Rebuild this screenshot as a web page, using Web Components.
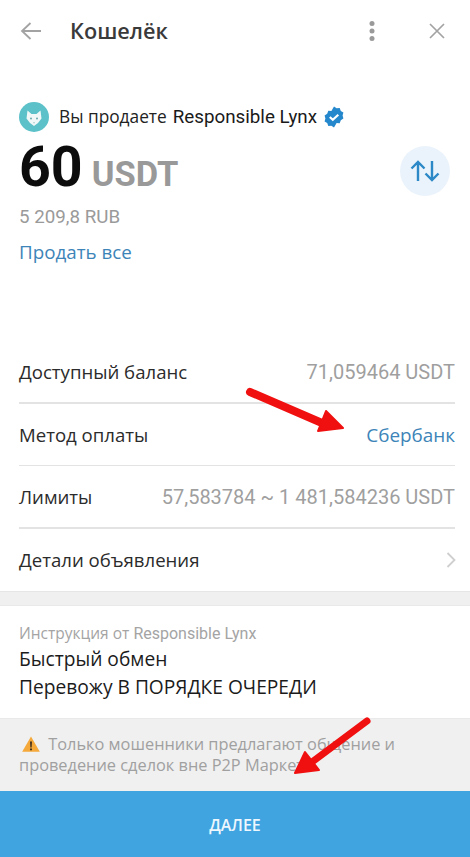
<!DOCTYPE html>
<html lang="ru">
<head>
<meta charset="utf-8">
<title>Кошелёк</title>
<style>
  html, body { margin: 0; padding: 0; background: #fff; }
  body { width: 470px; height: 857px; overflow: hidden; position: relative; font-family: "Open Sans", sans-serif; }
</style>
</head>
<body>
<wallet-app></wallet-app>

<script>
const FONT_OS = `"Open Sans", sans-serif`;
const FONT_RB = `Roboto, sans-serif`;

class WalletHeader extends HTMLElement {
    connectedCallback() {
        this.attachShadow({mode: "open"});
        this.shadowRoot.innerHTML = `
        <style>
          :host { display: flex; align-items: center; height: 62px; padding: 0 25px 0 20px; }
          svg { display: block; flex: none; }
          .title { font: 600 21.700px/28px ${FONT_OS}; color: #3a3a3a; margin-left: 28px; flex: 1; }
          .dots { margin-right: 54px; }
        </style>
        <svg width="22" height="20" viewBox="0 0 22 20" fill="none" stroke="#a3a3a3" stroke-width="1.8"><path d="M21 10H2M10.5 2 2 10l8.500 8"/></svg>
        <div class="title"><slot></slot></div>
        <svg class="dots" width="6" height="20" viewBox="0 0 6 20" fill="#9a9a9a"><circle cx="3" cy="2.500" r="2.500"/><circle cx="3" cy="10" r="2.500"/><circle cx="3" cy="17.500" r="2.500"/></svg>
        <svg width="16" height="16" viewBox="0 0 16 16" fill="none" stroke="#a3a3a3" stroke-width="1.700"><path d="M1 1l14 14M15 1 1 15"/></svg>`;
    }
}
customElements.define("wallet-header", WalletHeader);

class AmountPanel extends HTMLElement {
    connectedCallback() {
        this.attachShadow({mode: "open"});
        this.shadowRoot.innerHTML = `
        <style>
          :host { display: block; padding: 40px 20px 0 19px; height: 279px; box-sizing: border-box; }
          .seller { display: flex; align-items: center; height: 30px; font: 400 17.300px/30px ${FONT_OS}; color: #222; }
          .avatar { flex: none; margin-right: 10px; }
          .seller b { font: 400 18.800px/30px ${FONT_RB}; color: #1a1a1a; margin-left: 6px; }
          .badge { flex: none; margin-left: 6px; }
          .main { display: flex; align-items: center; justify-content: space-between; margin-top: 9px; height: 60px; }
          .sum { display: flex; align-items: baseline; gap: 9px; font: 700 55.500px/60px ${FONT_RB}; color: #0c0c0c; }
          .sum span { font-size: 34.500px; color: #999; }
          .swap { width: 50px; height: 50px; border-radius: 50%; background: #eaf3fb; display: flex; align-items: center; justify-content: center; }
          .fiat { font: 400 18.750px/24px ${FONT_RB}; color: #9a9a9a; margin-top: 4px; }
          .all { font: 400 18.800px/24px ${FONT_OS}; color: #3d84b8; margin-top: 11px; }
        </style>
        <div class="seller">
          <svg class="avatar" width="30" height="30" viewBox="0 0 30 30">
            <circle cx="15" cy="15" r="15" fill="#5cc1c9"/>
            <path d="M8.500 8.500 12.500 12h5l4-3.500 1 8L19 21l-4 3-4-3-3.500-4.500z" fill="#f2f7f7"/>
            <circle cx="12" cy="16.500" r="1" fill="#6aa9ad"/><circle cx="18" cy="16.500" r="1" fill="#6aa9ad"/>
            <path d="M14 20.500h2l-1 1z" fill="#6aa9ad"/>
          </svg>
          <span>Вы продаете</span><b>Responsible Lynx</b>
          <svg class="badge" width="22" height="22" viewBox="0 0 22 22">
            <path d="M11 0.500l2.600 1.700 3.100-.2 1.100 2.900 2.600 1.700-.8 3 .8 3-2.600 1.700-1.100 2.900-3.100-.2L11 21.500l-2.600-1.700-3.100.2-1.100-2.900-2.600-1.700.8-3-.8-3 2.600-1.700 1.100-2.900 3.100.2z" fill="#2587cc"/>
            <path d="M6.800 11l3 2.800 5.500-5" fill="none" stroke="#fff" stroke-width="2.200"/>
          </svg>
        </div>
        <div class="main">
          <div class="sum">60<span>USDT</span></div>
          <div class="swap">
            <svg width="30" height="22" viewBox="0 0 30 22" fill="none" stroke="#2c88c6" stroke-width="2.400"><path d="M8 21V2M1.500 8.500 8 2l6.500 6.500M22 1v19M15.500 13.500 22 20l6.500-6.500"/></svg>
          </div>
        </div>
        <div class="fiat">5 209,8 RUB</div>
        <div class="all">Продать все</div>`;
    }
}
customElements.define("amount-panel", AmountPanel);

class InfoRow extends HTMLElement {
    connectedCallback() {
        this.attachShadow({mode: "open"});
        this.shadowRoot.innerHTML = `
        <style>
          :host { display: flex; align-items: center; justify-content: space-between; height: 62.500px; margin: 0 15px 0 19px; padding-top: 2px; box-sizing: border-box; border-bottom: 2px solid #e3e3e3; }
          :host([last]) { border-bottom: 0; padding-top: 0; }
          :host([thin]) { border-bottom-width: 1px; }
          .label { font: 400 18.600px/24px ${FONT_OS}; color: #2b2b2b; }
          .value { font: 400 20px/24px ${FONT_RB}; color: #9f9f9f; }
          :host([link]) .value { font: 400 18.900px/24px ${FONT_OS}; color: #3d84b8; }
        </style>
        <div class="label"><slot></slot></div>
        <div class="value"><slot name="value"></slot></div>`;
    }
}
customElements.define("info-row", InfoRow);

class InstructionCard extends HTMLElement {
    connectedCallback() {
        this.attachShadow({mode: "open"});
        this.shadowRoot.innerHTML = `
        <style>
          :host { display: block; background: #fff; padding: 16px 19px 0; height: 114px; box-sizing: border-box; border-top: 1px solid #e9e9e9; border-bottom: 1px solid #e9e9e9; }
          .head { font: 400 15.500px/22px ${FONT_OS}; color: #a4a4a4; }
          .head span { font-family: ${FONT_RB}; font-size: 16px; }
          .body { font: 400 19.200px/28px ${FONT_OS}; color: #1b1b1b; }
        </style>
        <div class="head">Инструкция от <span>Responsible Lynx</span></div>
        <div class="body"><slot></slot></div>`;
    }
}
customElements.define("instruction-card", InstructionCard);

class WarningNote extends HTMLElement {
    connectedCallback() {
        this.attachShadow({mode: "open"});
        this.shadowRoot.innerHTML = `
        <style>
          :host { display: block; background: #f0f0f0; height: 72px; padding: 15px 19px 0; box-sizing: border-box; font: 400 16.350px/20.500px ${FONT_OS}; color: #a0a0a0; }
          svg { display: inline-block; vertical-align: -2px; margin: 0 4px 0 3px; }
        </style>
        <svg width="18" height="16" viewBox="0 0 18 16"><path d="M9 .5 17.800 15.800H.2z" fill="#f4a93a"/><path d="M8.100 5.500h1.800l-.3 6H8.400zM8.100 12.500h1.800v1.800H8.100z" fill="#33261a"/></svg>
        <slot></slot>`;
    }
}
customElements.define("warning-note", WarningNote);

class NextButton extends HTMLElement {
    connectedCallback() {
        this.attachShadow({mode: "open"});
        this.shadowRoot.innerHTML = `
        <style>
          :host { display: flex; align-items: center; justify-content: center; height: 66px; padding-top: 2px; box-sizing: border-box; background: #40a4e1; color: #eef7fd; font: 600 16px/20px ${FONT_OS}; }
        </style>
        <slot></slot>`;
    }
}
customElements.define("next-button", NextButton);

class WalletApp extends HTMLElement {
    connectedCallback() {
        this.attachShadow({mode: "open"});
        this.shadowRoot.innerHTML = `
        <style>
          :host { display: block; position: relative; width: 470px; height: 857px; background: #fff; overflow: hidden; }
          .rows { height: 250px; }
          .gap { height: 14px; background: #f0f0f0; border-top: 1px solid #e6e6e6; box-sizing: border-box; }
          .arrow { position: absolute; left: 0; top: 0; }
        </style>
        <wallet-header>Кошелёк</wallet-header>
        <amount-panel></amount-panel>
        <div class="rows">
          <info-row>Доступный баланс<span slot="value">71,059464 USDT</span></info-row>
          <info-row thin link>Метод оплаты<span slot="value">Сбербанк</span></info-row>
          <info-row>Лимиты<span slot="value">57,583784 ~ 1 481,584236 USDT</span></info-row>
          <info-row last>Детали объявления<svg slot="value" width="10" height="16" viewBox="0 0 10 16" fill="none" stroke="#cfcfcf" stroke-width="1.800" style="display:block;margin-right:-1px"><path d="M1.500 1l7 7-7 7"/></svg></info-row>
        </div>
        <div class="gap"></div>
        <instruction-card>Быстрый обмен<br>Перевожу В ПОРЯДКЕ ОЧЕРЕДИ</instruction-card>
        <warning-note>Только мошенники предлагают общение и проведение сделок вне P2P Маркета</warning-note>
        <next-button>ДАЛЕЕ</next-button>
        <svg class="arrow" width="470" height="857" viewBox="0 0 470 857">
          <path d="M250 392 322 423" stroke="#f01010" stroke-width="8" stroke-linecap="round" fill="none"/>
          <path d="M343 428 318 431 326 411z" fill="#f01010" stroke="#f01010" stroke-width="2" stroke-linejoin="round"/>
          <path d="M367 721 312 762" stroke="#f01010" stroke-width="7" stroke-linecap="round" fill="none"/>
          <path d="M295 773 319 770 305 752z" fill="#f01010" stroke="#f01010" stroke-width="2" stroke-linejoin="round"/>
        </svg>`;
    }
}
customElements.define("wallet-app", WalletApp);
</script>
</body>
</html>
